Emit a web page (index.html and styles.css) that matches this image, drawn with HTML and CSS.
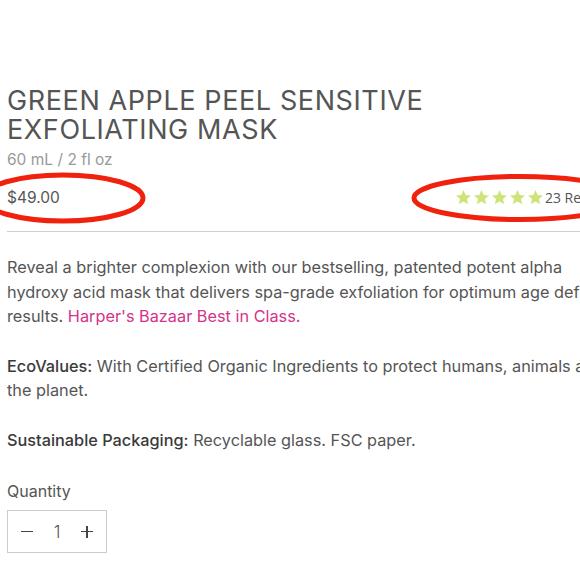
FILE: index.html
```html
<!DOCTYPE html>
<html lang="en">
<head>
<meta charset="utf-8">
<title>Green Apple Peel Sensitive Exfoliating Mask</title>
<link rel="stylesheet" href="styles.css">
</head>
<body>
<div class="viewport">
  <main class="product">
    <h1 class="title">GREEN APPLE PEEL SENSITIVE<br>EXFOLIATING MASK</h1>
    <div class="size">60 mL / 2 fl oz</div>
    <div class="price-row">
      <span class="price">$49.00</span>
      <span class="rating">
        <span class="stars">
          <svg viewBox="0 0 24 24"><path d="M12 1.5l3.1 7 7.4.6-5.6 4.9 1.7 7.4L12 17.5l-6.6 3.9 1.7-7.4L1.5 9.1l7.4-.6z"/></svg>
          <svg viewBox="0 0 24 24"><path d="M12 1.5l3.1 7 7.4.6-5.6 4.9 1.7 7.4L12 17.5l-6.6 3.9 1.7-7.4L1.5 9.1l7.4-.6z"/></svg>
          <svg viewBox="0 0 24 24"><path d="M12 1.5l3.1 7 7.4.6-5.6 4.9 1.7 7.4L12 17.5l-6.6 3.9 1.7-7.4L1.5 9.1l7.4-.6z"/></svg>
          <svg viewBox="0 0 24 24"><path d="M12 1.5l3.1 7 7.4.6-5.6 4.9 1.7 7.4L12 17.5l-6.6 3.9 1.7-7.4L1.5 9.1l7.4-.6z"/></svg>
          <svg viewBox="0 0 24 24"><path d="M12 1.5l3.1 7 7.4.6-5.6 4.9 1.7 7.4L12 17.5l-6.6 3.9 1.7-7.4L1.5 9.1l7.4-.6z"/></svg>
        </span>
        <span class="count">23 Reviews</span>
      </span>
    </div>
    <hr class="divider">
    <p class="text">Reveal a brighter complexion with our bestselling, patented potent alpha<br>hydroxy acid mask that delivers spa-grade exfoliation for optimum age defying results. <a class="link" href="#">Harper's Bazaar Best in Class.</a></p>
    <p class="text"><strong>EcoValues:</strong> With Certified Organic Ingredients to protect humans, animals and the planet.</p>
    <p class="text"><strong>Sustainable Packaging:</strong> Recyclable glass. FSC paper.</p>
    <div class="qty-label">Quantity</div>
    <div class="qty">
      <span class="qty-minus" aria-label="Decrease"></span>
      <span class="qty-val">1</span>
      <span class="qty-plus" aria-label="Increase"></span>
    </div>
  </main>
  <svg class="marks" viewBox="0 0 580 580" width="580" height="580" aria-hidden="true">
    <ellipse cx="63" cy="198" rx="80" ry="23" />
    <ellipse cx="520" cy="198" rx="106" ry="21.5" />
  </svg>
</div>
</body>
</html>
```
FILE: styles.css
```css
html, body {
  margin: 0;
  padding: 0;
  background: #fff;
}
.viewport {
  position: relative;
  width: 580px;
  height: 580px;
  overflow: hidden;
}
.product {
  width: 610px;
  padding: 86px 0 0 7px;
  font-family: Inter, Roboto, "Liberation Sans", sans-serif;
  color: #555;
}
.title {
  margin: 0;
  font-size: 27px;
  line-height: 29px;
  font-weight: 400;
  letter-spacing: 0.6px;
  color: #555;
}
.size {
  margin-top: 6px;
  font-size: 15.5px;
  line-height: 20px;
  color: #999;
}
.price-row {
  display: flex;
  justify-content: space-between;
  align-items: center;
  margin-top: 17px;
  height: 20px;
}
.price {
  font-size: 15.5px;
  color: #555;
}
.rating {
  display: flex;
  align-items: center;
}
.stars {
  display: flex;
  gap: 1px;
  margin-right: 1px;
}
.stars svg {
  width: 17px;
  height: 17px;
  fill: #cde47a;
}
.count {
  font-family: "Open Sans", sans-serif;
  font-size: 14px;
  color: #555;
}
.divider {
  margin: 24px 0 0;
  border: 0;
  border-top: 1px solid #d0d0d0;
}
.text {
  margin: 23px 0 0;
  font-size: 16.3px;
  line-height: 24.5px;
  color: #555;
}
.text + .text {
  margin-top: 25px;
}
.text strong {
  font-weight: 500;
  color: #3a3a3a;
}
.link {
  color: #d4338c;
  text-decoration: none;
}
.qty-label {
  margin-top: 27px;
  font-size: 16px;
  line-height: 24px;
  color: #555;
}
.qty {
  margin-top: 7px;
  width: 98px;
  height: 41px;
  padding: 0 13px;
  box-sizing: border-box;
  width: 100px;
  height: 43px;
  border: 1px solid #ccc;
  display: flex;
  align-items: center;
  justify-content: space-between;
}
.qty-minus,
.qty-plus {
  position: relative;
  width: 12px;
  height: 12px;
}
.qty-minus::before,
.qty-plus::before,
.qty-plus::after {
  content: "";
  position: absolute;
  background: #444;
}
.qty-minus::before,
.qty-plus::before {
  left: 0;
  top: 5.5px;
  width: 12px;
  height: 1.3px;
}
.qty-plus::after {
  left: 5.5px;
  top: 0;
  width: 1.3px;
  height: 12px;
}
.qty-val {
  font-size: 17px;
  font-weight: 300;
  color: #555;
}
.marks {
  position: absolute;
  left: 0;
  top: 0;
  pointer-events: none;
}
.marks ellipse {
  fill: none;
  stroke: #f0220e;
  stroke-width: 5;
}
```
